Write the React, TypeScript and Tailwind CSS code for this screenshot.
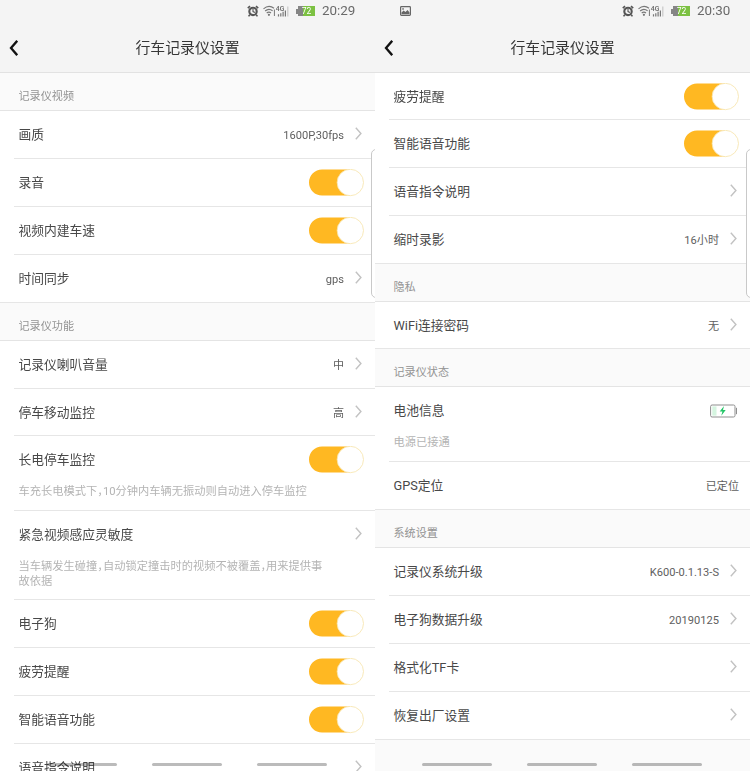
import React from 'react';

interface RowProps {
  label: string;
  value?: string;
  type?: 'link' | 'switch' | 'text' | 'battery';
  hint?: string;
  height?: string;
  last?: boolean;
}

const Chevron = () => (
  <svg className="w-[7px] h-[13px] ml-[11px] mr-[2px] mb-[3px] shrink-0" viewBox="0 0 7 13" fill="none">
    <path d="M0.8 0.8L5.9 6.5L0.8 12.2" stroke="#c2c2c2" strokeWidth="1.4" />
  </svg>
);

const Switch = () => (
  <svg className="w-[56px] h-[28px] shrink-0 -mr-[1px]" viewBox="0 0 56 28">
    <path d="M13 0.5H41V26.5H13A13 13 0 0 1 13 0.5Z" fill="#ffb822" />
    <circle cx="41.3" cy="13.5" r="13.2" fill="#fff" stroke="#f6e3a8" strokeWidth="0.8" />
  </svg>
);

const BatteryCharging = () => (
  <svg className="w-[28px] h-[14px] shrink-0 mr-[1px]" viewBox="0 0 28 14">
    <rect x="0.6" y="1" width="24.4" height="12" rx="1.5" fill="#fff" stroke="#8f8f8f" />
    <rect x="2.3" y="2.4" width="4.2" height="9.2" fill="#d5f5e0" />
    <path d="M14 2L9.7 7.6h2.7L11.3 11.8L15.7 6.1h-2.7z" fill="#22c566" />
    <path d="M26.5 3.8v6.4" stroke="#8f8f8f" strokeWidth="1" />
  </svg>
);

const Row: React.FC<RowProps> = ({ label, value, type = 'link', hint, height = 'h-[48px]', last }) => (
  <div className={`${height} bg-white shrink-0 ${last ? '' : 'pl-[14px]'}`}>
    <div className={`h-full border-b border-[#e6e6e6] pr-[11px] ${last ? 'pl-[18.5px]' : 'pl-[4.5px]'}`}>
      <div className="h-[47px] flex items-center justify-between">
        <span className="text-[12.75px] leading-[18px] text-[#484848]">{label}</span>
        <div className="flex items-center">
          {value && <span className="text-[11.1px] leading-[16px] text-[#5e5e5e] pt-[2px]">{value}</span>}
          {type === 'link' && <Chevron />}
          {type === 'switch' && <Switch />}
          {type === 'battery' && <BatteryCharging />}
        </div>
      </div>
      {hint && (
        <p className="w-[312px] mt-[1px] text-[11.25px] leading-[15px] text-[#b4b4b4] [font-feature-settings:'halt']">
          {hint}
        </p>
      )}
    </div>
  </div>
);

const Section = ({ title }: { title: string }) => (
  <div className="h-[38px] shrink-0 bg-[#fafafa] border-b border-[#e4e4e4] pl-[18.5px] pt-[16px] text-[11.1px] leading-[15px] text-[#939393]">
    {title}
  </div>
);

const StatusBar = ({ time, screenshot }: { time: string; screenshot?: boolean }) => (
  <div className="h-[22px] flex items-center pl-[25px] pr-[20px] text-[#6a6a6a]">
    {screenshot && (
      <svg className="w-[11px] h-[10px]" viewBox="0 0 11 10">
        <rect x="0.6" y="0.6" width="9.8" height="8.8" rx="0.8" fill="none" stroke="#666" strokeWidth="1.2" />
        <path d="M1.5 8.2V6.6L3.6 4.6L5.4 6L7.6 4L9.5 6.4V8.2z" fill="#666" />
        <rect x="2.3" y="2.2" width="1.5" height="1.5" fill="#666" />
      </svg>
    )}
    <div className="ml-auto flex items-center">
      <svg className="w-[12px] h-[12px] mb-[1px]" viewBox="0 0 12 12" fill="none" stroke="#555">
        <circle cx="6" cy="6.4" r="3.7" strokeWidth="2.1" />
        <path d="M0.8 3.2L3 1.2M11.2 3.2L9 1.2M2.8 9.6L1.6 11.4M9.2 9.6L10.4 11.4" strokeWidth="1.6" />
        <path d="M6 4v2.6l1.9 1" strokeWidth="1.1" />
      </svg>
      <svg className="w-[27px] h-[12px] ml-[4px] mb-[1px]" viewBox="0 0 27 12" fill="none" stroke="#777">
        <path d="M0.5 3.8Q5.7 -0.8 11 3.2M2.1 6Q5.8 2.8 9.6 5.8M3.7 8Q5.9 6.2 8 8" strokeWidth="1.1" />
        <circle cx="5.9" cy="9.8" r="1.1" fill="#777" stroke="none" />
        <path d="M11.4 4.5v6.5" strokeWidth="1" />
        <text x="12.8" y="5.6" fontSize="6.8" fontWeight="500" fontFamily="Roboto" fill="#666" stroke="none">4G</text>
        <path d="M15.5 9.2v2.3M17.8 8.2v3.3M20.1 6.8v4.7M22.4 5.5v6" strokeWidth="1.2" />
        <path d="M24.8 1.5v10" stroke="#c9c9c9" strokeWidth="1.2" />
      </svg>
      <div className="ml-[6px] flex items-center">
        <div className="w-[2px] h-[5px] bg-[#858585]" />
        <div className="w-[17px] h-[10px] bg-[linear-gradient(90deg,#858585_28%,#7cc142_28%)] text-white text-[8.5px] leading-[11px] text-center">
          72
        </div>
      </div>
      <span className="ml-[7px] w-[33px] text-[13.4px] leading-[18px] whitespace-nowrap">{time}</span>
    </div>
  </div>
);

const Phone = ({ time, screenshot, children }: { time: string; screenshot?: boolean; children: React.ReactNode }) => (
  <div className="relative w-[375px] h-[771px] overflow-hidden bg-[#fafafa] flex flex-col">
    <div className="h-[73px] shrink-0 bg-[#f4f4f4] border-b border-[#e2e2e2]">
      <StatusBar time={time} screenshot={screenshot} />
      <div className="h-[50px] flex items-center pl-[9px] pr-[18px]">
        <svg className="w-[9px] h-[16px] mt-[1px]" viewBox="0 0 9 16" fill="none">
          <path d="M8.2 0.8L2 8L8.2 15.2" stroke="#111" strokeWidth="2.3" />
        </svg>
        <h1 className="flex-1 text-center text-[14.9px] leading-[20px] text-[#363636] pt-[2px]">行车记录仪设置</h1>
      </div>
    </div>
    {children}
    {/* edge panel handle */}
    <div className="absolute left-[371px] top-[149px] w-[12px] h-[149px] rounded-[5px] border border-[#c9c9c9] bg-white" />
    {/* navigation keys */}
    <div className="absolute left-[47px] top-[763px] flex gap-[35px] mix-blend-multiply">
      <div className="w-[70px] h-[3px] rounded-full bg-[#bbb]" />
      <div className="w-[70px] h-[3px] rounded-full bg-[#bbb]" />
      <div className="w-[70px] h-[3px] rounded-full bg-[#bbb]" />
    </div>
  </div>
);

const App: React.FC = () => {
  return (
    <div className="w-[750px] h-[771px] flex overflow-hidden bg-white font-['Roboto','Noto_Sans_CJK_SC',sans-serif]">
      <Phone time="20:29">
        <Section title="记录仪视频" />
        <Row label="画质" value="1600P,30fps" />
        <Row label="录音" type="switch" />
        <Row label="视频内建车速" type="switch" />
        <Row label="时间同步" value="gps" last />
        <Section title="记录仪功能" />
        <Row label="记录仪喇叭音量" value="中" />
        <Row label="停车移动监控" value="高" height="h-[47px]" />
        <Row
          label="长电停车监控"
          type="switch"
          height="h-[75px]"
          hint="车充长电模式下，10分钟内车辆无振动则自动进入停车监控"
        />
        <Row
          label="紧急视频感应灵敏度"
          height="h-[89px]"
          hint="当车辆发生碰撞，自动锁定撞击时的视频不被覆盖，用来提供事故依据"
        />
        <Row label="电子狗" type="switch" />
        <Row label="疲劳提醒" type="switch" />
        <Row label="智能语音功能" type="switch" />
        <Row label="语音指令说明" />
      </Phone>
      <Phone time="20:30" screenshot>
        <Row label="疲劳提醒" type="switch" height="h-[47px]" />
        <Row label="智能语音功能" type="switch" />
        <Row label="语音指令说明" />
        <Row label="缩时录影" value="16小时" last />
        <Section title="隐私" />
        <Row label="WiFi连接密码" value="无" height="h-[47px]" last />
        <Section title="记录仪状态" />
        <Row label="电池信息" type="battery" height="h-[75px]" hint="电源已接通" />
        <Row label="GPS定位" value="已定位" type="text" last />
        <Section title="系统设置" />
        <Row label="记录仪系统升级" value="K600-0.1.13-S" />
        <Row label="电子狗数据升级" value="20190125" />
        <Row label="格式化TF卡" />
        <Row label="恢复出厂设置" last />
      </Phone>
    </div>
  );
};

export default App;
